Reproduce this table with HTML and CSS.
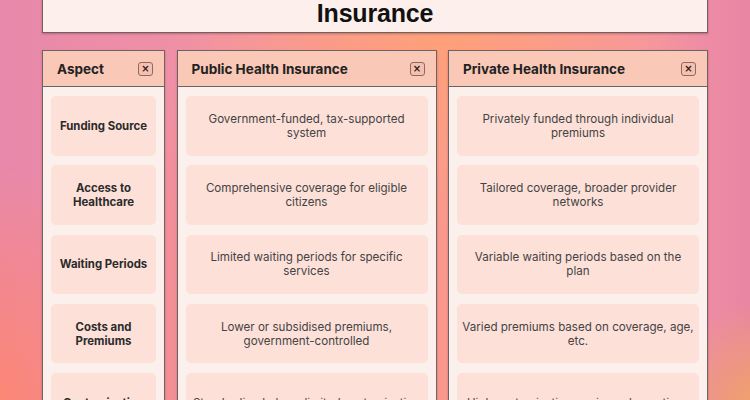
FILE: index.html
```html
<!DOCTYPE html>
<html lang="en">
<head>
<meta charset="utf-8">
<title>Public vs Private Health Insurance</title>
<link rel="stylesheet" href="styles.css">
</head>
<body>
<div class="page">
  <header class="title-box">
    <h1 class="title">Public vs Private Health<br>Insurance</h1>
  </header>
  <main class="board">
    <section class="col col-aspect">
      <div class="col-head"><span class="col-title">Aspect</span><span class="close">&times;</span></div>
      <div class="col-body">
        <div class="cell cell-key">Funding Source</div>
        <div class="cell cell-key">Access to<br>Healthcare</div>
        <div class="cell cell-key">Waiting Periods</div>
        <div class="cell cell-key">Costs and<br>Premiums</div>
        <div class="cell cell-key">Customisation</div>
      </div>
    </section>
    <section class="col">
      <div class="col-head"><span class="col-title">Public Health Insurance</span><span class="close">&times;</span></div>
      <div class="col-body">
        <div class="cell">Government-funded, tax-supported<br>system</div>
        <div class="cell">Comprehensive coverage for eligible<br>citizens</div>
        <div class="cell">Limited waiting periods for specific<br>services</div>
        <div class="cell">Lower or subsidised premiums,<br>government-controlled</div>
        <div class="cell">Standardised plans, limited customisation</div>
      </div>
    </section>
    <section class="col">
      <div class="col-head"><span class="col-title">Private Health Insurance</span><span class="close">&times;</span></div>
      <div class="col-body">
        <div class="cell">Privately funded through individual<br>premiums</div>
        <div class="cell">Tailored coverage, broader provider<br>networks</div>
        <div class="cell">Variable waiting periods based on the<br>plan</div>
        <div class="cell">Varied premiums based on coverage, age,<br>etc.</div>
        <div class="cell">High customisation, various plan options</div>
      </div>
    </section>
  </main>
</div>
</body>
</html>
```
FILE: styles.css
```css
html, body {
  margin: 0;
  padding: 0;
  height: 400px;
  overflow: hidden;
}
body {
  font-family: "Inter", "Noto Sans", sans-serif;
  background:
    radial-gradient(ellipse 260px 200px at 440px 40px, rgba(255,160,120,0.95), rgba(255,160,120,0) 100%),
    radial-gradient(ellipse 90px 110px at 760px 410px, rgba(240,165,100,1), rgba(240,165,100,0) 100%),
    radial-gradient(ellipse 200px 260px at -20px 420px, rgba(255,135,110,1), rgba(255,135,110,0) 100%),
    radial-gradient(ellipse 250px 300px at 300px 330px, rgba(255,140,120,0.7), rgba(255,140,120,0) 100%),
    linear-gradient(90deg, #e888ab 0%, #f394a3 35%, #f99c95 60%, #f596a3 85%, #e985a4 100%);
}
.page {
  padding: 0 42px;
}
.title-box {
  margin-top: -43px;
  background: #fdf0ec;
  border: 1px solid #6f6262;
  box-shadow: 0 1px 2px rgba(80,40,40,0.35);
  padding: 10px 0 4px;
}
.title {
  margin: 0;
  font-family: "Liberation Sans", Arial, sans-serif;
  font-weight: 700;
  font-size: 25px;
  line-height: 30px;
  text-align: center;
  color: #111;
  letter-spacing: -0.2px;
}
.board {
  margin-top: 17px;
  display: grid;
  grid-template-columns: 123px 1fr 1fr;
  column-gap: 11.5px;
  align-items: start;
}
.col {
  border: 1px solid #6f6262;
  background: #fcf0ec;
  box-shadow: 0 1px 2px rgba(80,40,40,0.3);
}
.col-head {
  height: 35px;
  background: #f9c8b7;
  border-bottom: 1px solid #6f6262;
  display: flex;
  align-items: center;
  justify-content: space-between;
  padding: 0 11px 0 14px;
}
.col-title {
  font-weight: 700;
  font-size: 13.5px;
  color: #222;
}
.close {
  width: 13px;
  height: 12px;
  border: 1px solid #8a6a66;
  border-radius: 3px;
  background: #f6bfae;
  display: flex;
  align-items: center;
  justify-content: center;
  font-family: "DejaVu Sans", sans-serif;
  font-weight: 700;
  font-size: 10px;
  line-height: 1;
  color: #2a2222;
}
.col-body {
  padding: 9px 8px;
  display: flex;
  flex-direction: column;
  gap: 9.75px;
}
.cell {
  height: 59.5px;
  background: #fde0d8;
  border-radius: 5px;
  display: flex;
  align-items: center;
  justify-content: center;
  text-align: center;
  padding: 0 2px;
  font-size: 11.6px;
  line-height: 14px;
  color: #444;
  white-space: nowrap;
}
.cell-key {
  font-weight: 700;
  font-size: 11.4px;
  color: #2b2b2b;
}
```
